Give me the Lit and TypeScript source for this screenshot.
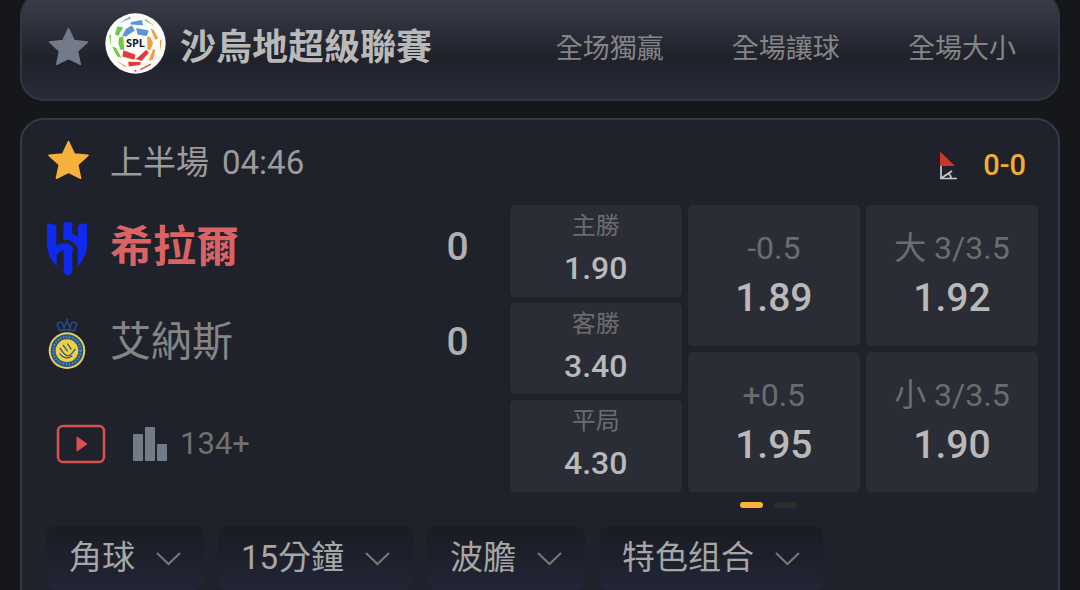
import { LitElement, html, css, svg } from "lit";
import { customElement, property, state } from "lit/decorators.js";

const STAR = svg`<path d="M20 1.5 L25.6 13.6 L39 15 L29 24.200 L31.800 37.300 L20 31.500 L8.200 37.300 L11 24.200 L1 15 L14.400 13.600 Z" stroke-width="1.500" stroke-linejoin="round"></path>`;

@customElement("league-header")
class LeagueHeader extends LitElement {
  @property({ type: Array }) markets: string[] = [];

  static styles = css`
    :host {
      display: flex;
      align-items: center;
      height: 109px;
      box-sizing: border-box;
      border: 2px solid #323544;
      border-radius: 24px;
      background: linear-gradient(#3a3e4a 0, #363a46 12%, #1f212a 62%, #282b39 100%);
    }
    .league {
      flex: 1;
      display: flex;
      align-items: center;
      padding-left: 26px;
      min-width: 0;
    }
    .fav {
      padding: 0;
      border: 0;
      background: none;
      line-height: 0;
      fill: #727b87;
      stroke: #727b87;
    }
    .logo {
      width: 61px;
      height: 61px;
      margin: 0 14px 6px 16px;
      flex: none;
    }
    .logo text {
      font: 700 33px "Open Sans", sans-serif;
      fill: #17191d;
    }
    h1 {
      margin: 0;
      padding-top: 3px;
      font-size: 36px;
      line-height: 48px;
      font-weight: 700;
      color: #b9b9b9;
      white-space: nowrap;
    }
    .markets {
      flex: 0 0 51%;
      display: grid;
      grid-template-columns: repeat(3, 1fr);
      padding: 4px 8px 0 0;
      text-align: center;
      font-size: 27px;
      line-height: 40px;
      color: #858587;
      white-space: nowrap;
    }
  `;

  render() {
    return html`
      <div class="league">
        <button class="fav" aria-label="收藏聯賽"><svg width="41" height="40" viewBox="0 0 40 40">${STAR}</svg></button>
        <svg class="logo" viewBox="315 39 184 184" aria-hidden="true">
          <circle cx="407" cy="131" r="91" fill="#fdfdfb"></circle>
          <g fill="#5e94d2">
            <path d="M367 108 L377 88 L396 76 L405 92 L378 110Z M409 84 L447 92 L441 108 L413 104Z M393 67 L426 60 L430 76 L392 74Z M359 69 L390 50 L393 55Z"></path>
          </g>
          <g fill="#6ccb3e">
            <path d="M358 112 L370 110 L373 150 L362 150 L355 130Z M352 80 L370 82 L355 108 L345 104Z M337 141 L348 144 L365 174 L352 170Z M434 61 L437 57 L467 80Z M328 105 L333 103 L332 140Z"></path>
          </g>
          <g fill="#f0a03c">
            <path d="M442 110 L452 112 L460 130 L452 150 L443 150Z M452 86 L462 90 L476 116 L466 120Z M460 148 L467 150 L460 180 L446 184Z M481 120 L486 122 L481 157Z M345 181 L378 199 L376 203Z"></path>
          </g>
          <g fill="#e23c3a">
            <path d="M371 151 L407 165 L403 180 L367 170Z M440 150 L447 160 L425 184 L408 178Z M385 186 L423 187 L421 196 L387 200Z M420 209 L453 191 L454 195 L423 212Z"></path>
            <circle cx="407" cy="213" r="3"></circle>
          </g>
          <text x="407" y="142" text-anchor="middle">SPL</text>
        </svg>
        <h1>沙烏地超級聯賽</h1>
      </div>
      <div class="markets">${this.markets.map((m) => html`<span>${m}</span>`)}</div>
    `;
  }
}

@customElement("odds-cell")
class OddsCell extends LitElement {
  @property() label = "";
  @property() odds = "";
  @property({ type: Boolean, reflect: true }) large = false;

  static styles = css`
    :host {
      display: flex;
      flex: 1;
      min-height: 0;
    }
    button {
      flex: 1;
      display: flex;
      flex-direction: column;
      align-items: center;
      justify-content: center;
      padding: 0 0 4px;
      border: 0;
      border-radius: 5px;
      background: #2a2d35;
      font-family: inherit;
      font-size: 24px;
      color: #b9b9b9;
      white-space: nowrap;
    }
    .label {
      line-height: 38px;
      color: #6c6c6e;
    }
    .odds {
      font-size: 32px;
      line-height: 46px;
      font-weight: 500;
    }
    :host([large]) button {
      font-size: 32px;
    }
    :host([large]) .label {
      line-height: 50px;
    }
    :host([large]) .odds {
      font-size: 39px;
      line-height: 50px;
    }
  `;

  render() {
    return html`<button>
      <span class="label">${this.label}</span>
      <span class="odds">${this.odds}</span>
    </button>`;
  }
}

@customElement("match-card")
class MatchCard extends LitElement {
  @state() private columns = [
    { large: false, cells: [["主勝", "1.90"], ["客勝", "3.40"], ["平局", "4.30"]] },
    { large: true, cells: [["-0.5", "1.89"], ["+0.5", "1.95"]] },
    { large: true, cells: [["大 3/3.5", "1.92"], ["小 3/3.5", "1.90"]] },
  ];
  @state() private tabs = ["角球", "15分鐘", "波膽", "特色组合"];

  static styles = css`
    :host {
      display: block;
      box-sizing: border-box;
      border: 2px solid #363949;
      border-radius: 24px;
      background: #1f222b;
      color: #9b9b9c;
    }
    button {
      padding: 0;
      border: 0;
      background: none;
      color: inherit;
      font-family: inherit;
      line-height: 0;
    }
    .status {
      display: flex;
      align-items: center;
      height: 85px;
      padding: 0 32px 0 26px;
      font-size: 33px;
      line-height: 48px;
    }
    .fav {
      fill: #f6b13c;
      stroke: #f6b13c;
      margin: 0 21px 4px 0;
    }
    .clock {
      flex: 1;
      display: flex;
      gap: 13px;
    }
    .corner {
      margin: 6px 25px 0 0;
    }
    .corners {
      padding-top: 4px;
      color: #f0ac35;
      font-weight: 500;
      font-size: 29px;
    }
    .body {
      display: flex;
    }
    .teams {
      flex: 1;
      min-width: 0;
      display: flex;
      flex-direction: column;
    }
    .team {
      display: flex;
      align-items: center;
      height: 95px;
      padding: 0 41px 0 23px;
      font-size: 41px;
    }
    .team:first-child {
      height: 83px;
      margin-bottom: 6px;
    }
    .crest {
      width: 44px;
      flex: none;
      margin: 4px 21px 0 0;
    }
    .name {
      flex: 1;
      line-height: 56px;
      color: #858586;
    }
    .leading {
      font-size: 43px;
      font-weight: 700;
      color: #dc6363;
    }
    .score {
      font-size: 39px;
      font-weight: 500;
      color: #b0b0b0;
    }
    .extras {
      display: flex;
      align-items: center;
      height: 110px;
      padding-left: 34px;
      color: #707071;
    }
    .stats {
      display: flex;
      align-items: center;
      gap: 12px;
      margin-left: 27px;
      font-size: 31px;
      line-height: 40px;
    }
    .odds {
      flex: 0 0 51%;
      display: grid;
      grid-template-columns: repeat(3, 1fr);
      gap: 6px;
      height: 287px;
      margin-right: 20px;
    }
    .column {
      display: flex;
      flex-direction: column;
      gap: 6px;
      min-width: 0;
    }
    .pager {
      display: flex;
      justify-content: center;
      gap: 11px;
      width: 51%;
      box-sizing: border-box;
      margin: 0 20px 0 auto;
      padding: 9px 10px 18px 0;
      margin-top: -6px;
    }
    .dot {
      width: 23px;
      height: 6px;
      border-radius: 3px;
      background: #2e2d2e;
    }
    .dot.on {
      background: #f9b53e;
    }
    .tabs {
      display: flex;
      gap: 14px;
      padding: 0 24px 20px;
    }
    .tab {
      display: flex;
      align-items: center;
      gap: 21px;
      height: 64px;
      padding: 0 23px;
      border-radius: 10px;
      background: linear-gradient(#1a1c23, #212535);
      color: #a6a6a7;
      font-size: 33px;
      line-height: 62px;
      white-space: nowrap;
    }
  `;

  render() {
    return html`
      <div class="status">
        <button class="fav" aria-label="取消收藏"><svg width="41" height="41" viewBox="0 0 40 40">${STAR}</svg></button>
        <span class="clock"><span>上半場</span><span>04:46</span></span>
        <svg class="corner" width="20" height="30" viewBox="0 0 20 30" aria-hidden="true">
          <path d="M2 0.500 L17 15 H2Z" fill="#cf352e"></path>
          <path d="M3 15 V28 M2 27.500 H19 M3.500 27 L14 20 M10 22.500 Q13 24 13 27" fill="none" stroke="#c9c9cb" stroke-width="1.700"></path>
        </svg>
        <span class="corners">0-0</span>
      </div>
      <div class="body">
        <div class="teams">
          <div class="team">
            <svg class="crest" height="54" viewBox="9 13 126 162" aria-hidden="true">
              <g fill="#1029ee">
                <path d="M62 14 H88 V48 L105 58 V22 L132 16 V85 Q130 117 104 147 V92 Q90 64 60 66Z"></path>
                <path d="M12 16 L40 22 V84 Q54 76 70 77 Q88 80 95 102 L88 98 V165 L75 174 L62 165 V98 Q48 100 41 112 V147 Q14 117 12 85Z"></path>
              </g>
            </svg>
            <span class="name leading">希拉爾</span>
            <span class="score">0</span>
          </div>
          <div class="team">
            <svg class="crest" height="52" viewBox="134 355 132 156" aria-hidden="true">
              <path d="M178 393 L171 374 Q176 364 186 370 L191 384 L200 364 L209 384 L214 370 Q224 364 229 374 L222 393 Q200 388 178 393Z M200 357 V368" fill="none" stroke="#264a80" stroke-width="5"></path>
              <circle cx="200" cy="453" r="55" fill="#e6cf5c"></circle>
              <circle cx="200" cy="453" r="49" fill="#24598f"></circle>
              <circle cx="200" cy="453" r="41" fill="none" stroke="#c9be68" stroke-width="6" stroke-dasharray="4 5" opacity="0.500"></circle>
              <circle cx="200" cy="453" r="34" fill="#f1cf45"></circle>
              <path d="M178 445 L193 464 Q203 474 214 462 L225 448 M188 436 L202 455 M201 432 L213 449 M178 462 Q196 484 216 468" fill="none" stroke="#2c5c88" stroke-width="4"></path>
            </svg>
            <span class="name">艾納斯</span>
            <span class="score">0</span>
          </div>
          <div class="extras">
            <button aria-label="直播">
              <svg width="50" height="40" viewBox="0 0 50 40">
                <rect x="2" y="2" width="46" height="36" rx="5" fill="none" stroke="#d9504d" stroke-width="2.500"></rect>
                <path d="M21 13 L31 20 L21 27Z" fill="#d9504d" stroke="#d9504d" stroke-linejoin="round"></path>
              </svg>
            </button>
            <button class="stats">
              <svg width="35" height="36" viewBox="0 0 35 36" fill="#727b87" aria-hidden="true">
                <rect x="0" y="8" width="10" height="27" rx="1"></rect>
                <rect x="12" y="1" width="10" height="34" rx="1"></rect>
                <rect x="24" y="18" width="10" height="17" rx="1"></rect>
              </svg>
              134+
            </button>
          </div>
        </div>
        <div class="odds">
          ${this.columns.map(
            (c) => html`<div class="column">
              ${c.cells.map(([label, odds]) => html`<odds-cell .label=${label} .odds=${odds} ?large=${c.large}></odds-cell>`)}
            </div>`
          )}
        </div>
      </div>
      <div class="pager"><span class="dot on"></span><span class="dot"></span></div>
      <div class="tabs">
        ${this.tabs.map(
          (t) => html`<button class="tab">
            ${t}
            <svg width="25" height="16" viewBox="0 0 25 16" fill="none" stroke="#78787a" stroke-width="2" aria-hidden="true">
              <path d="M1 3 L12.500 14 L24 3"></path>
            </svg>
          </button>`
        )}
      </div>
    `;
  }
}

@customElement("app-root")
class AppRoot extends LitElement {
  static styles = css`
    :host {
      display: block;
      height: 100vh;
      overflow: hidden;
      background: #16171b;
      font-family: Roboto, "Noto Sans CJK TC", sans-serif;
    }
    .page {
      display: flex;
      flex-direction: column;
      gap: 17px;
      margin: -8px 20px 0;
    }
  `;

  render() {
    return html`<main class="page">
      <league-header .markets=${["全场獨贏", "全場讓球", "全場大小"]}></league-header>
      <match-card></match-card>
    </main>`;
  }
}
